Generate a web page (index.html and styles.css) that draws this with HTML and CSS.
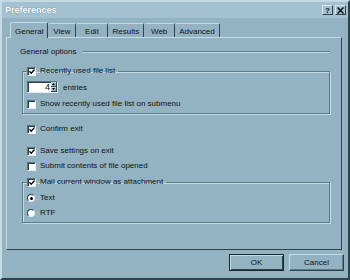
FILE: index.html
```html
<!DOCTYPE html>
<html lang="en">
<head>
    <meta charset="UTF-8">
    <title>Preferences</title>
    <link rel="stylesheet" href="styles.css">
</head>
<body>
    <div class="window">
        <div class="titlebar">
            <span class="title">Preferences</span>
            <div class="caption-btns">
                <span class="cbtn">?</span>
                <span class="cbtn">
                    <svg width="7" height="7" viewBox="0 0 7 7"><path d="M0.5 0.5 L6.5 6.5 M6.5 0.5 L0.5 6.5" stroke="#111" stroke-width="1.5"/></svg>
                </span>
            </div>
        </div>
        <div class="tabs">
            <div class="tab active">General</div>
            <div class="tab">View</div>
            <div class="tab">Edit</div>
            <div class="tab">Results</div>
            <div class="tab">Web</div>
            <div class="tab">Advanced</div>
        </div>
        <div class="panel">
            <div class="section-head"><span>General options</span><span class="rule"></span></div>

            <fieldset class="group">
                <legend>
                    <label class="check"><span class="box"><svg width="7" height="7" viewBox="0 0 7 7"><path d="M0.5 3.2 L2.6 5.4 L6.5 1.2" stroke="#000" stroke-width="1.6" fill="none"/></svg></span>Recently used file list</label>
                </legend>
                <div class="spin-row">
                    <div class="spin">
                        <span class="spin-val">4</span>
                        <span class="arrows">
                            <span class="arrow"><svg width="5" height="3" viewBox="0 0 5 3"><path d="M0 3 L2.5 0 L5 3Z" fill="#000"/></svg></span>
                            <span class="arrow"><svg width="5" height="3" viewBox="0 0 5 3"><path d="M0 0 L2.5 3 L5 0Z" fill="#000"/></svg></span>
                        </span>
                    </div>
                    <span>entries</span>
                </div>
                <label class="check show-row"><span class="box"></span>Show recently used file list on submenu</label>
            </fieldset>

            <label class="check row confirm"><span class="box"><svg width="7" height="7" viewBox="0 0 7 7"><path d="M0.5 3.2 L2.6 5.4 L6.5 1.2" stroke="#000" stroke-width="1.6" fill="none"/></svg></span>Confirm exit</label>
            <label class="check row save"><span class="box"><svg width="7" height="7" viewBox="0 0 7 7"><path d="M0.5 3.2 L2.6 5.4 L6.5 1.2" stroke="#000" stroke-width="1.6" fill="none"/></svg></span>Save settings on exit</label>
            <label class="check row submit"><span class="box"></span>Submit contents of file opened</label>

            <fieldset class="group mail">
                <legend>
                    <label class="check"><span class="box"><svg width="7" height="7" viewBox="0 0 7 7"><path d="M0.5 3.2 L2.6 5.4 L6.5 1.2" stroke="#000" stroke-width="1.6" fill="none"/></svg></span>Mail current window as attachment</label>
                </legend>
                <label class="check radio-row first"><span class="radio on"></span>Text</label>
                <label class="check radio-row"><span class="radio"></span>RTF</label>
            </fieldset>
        </div>
        <div class="footer">
            <button class="btn default">OK</button>
            <button class="btn">Cancel</button>
        </div>
    </div>
</body>
</html>
```

FILE: styles.css
```css
body {
    margin: 0;
    padding: 0;
    background-color: #93b3c3;
    font-family: "Liberation Sans", Arial, sans-serif;
    font-size: 8px;
    color: #111;
}
.window {
    width: 350px;
    height: 280px;
    box-sizing: border-box;
    background-color: #93b3c3;
    border: 2px solid;
    border-color: #c4dae5 #2e434c #2e434c #c4dae5;
    display: flex;
    flex-direction: column;
}
.titlebar {
    height: 16px;
    display: flex;
    align-items: center;
    justify-content: space-between;
    padding: 0 2px 0 3px;
    background-color: #a3c1d0;
}
.title {
    color: #fff;
    font-weight: bold;
    font-size: 9px;
    text-shadow: 0 0 1px #4c6a78;
}
.caption-btns {
    display: flex;
    gap: 2px;
}
.cbtn {
    width: 11px;
    height: 10px;
    box-sizing: border-box;
    display: flex;
    align-items: center;
    justify-content: center;
    font-weight: bold;
    font-size: 8px;
    background-color: #a3c1d0;
    border: 1px solid;
    border-color: #d8e8ef #2e434c #2e434c #d8e8ef;
}
.tabs {
    display: flex;
    align-items: flex-end;
    margin: 3px 0 0 8px;
    height: 16px;
}
.tab {
    min-width: 28px;
    height: 14px;
    box-sizing: border-box;
    padding: 1px 4px 0;
    display: flex;
    align-items: center;
    justify-content: center;
    border-top: 1px solid #c4dae5;
    border-left: 1px solid #c4dae5;
    border-right: 1px solid #2e434c;
    border-radius: 2px 2px 0 0;
}
.tab + .tab {
    border-left: none;
}
.tab.active {
    height: 16px;
    margin-bottom: -1px;
    background-color: #93b3c3;
    position: relative;
    z-index: 1;
}
.tab:nth-child(3) {
    min-width: 32px;
}
.tab:nth-child(5) {
    min-width: 31px;
}
.panel {
    height: 213px;
    box-sizing: border-box;
    margin: 0 6px 0 4px;
    padding: 9px 11px 0 13px;
    border: 1px solid;
    border-color: #c4dae5 #2e434c #2e434c #c4dae5;
    display: flex;
    flex-direction: column;
    align-items: flex-start;
}
.section-head {
    align-self: stretch;
    display: flex;
    align-items: center;
    height: 10px;
    line-height: 10px;
}
.section-head .rule {
    flex: 1;
    margin-left: 7px;
    height: 0;
    border-top: 1px solid #5d7b89;
    border-bottom: 1px solid #c4dae5;
}
.group {
    align-self: stretch;
    margin: 9px 0 0 2px;
    padding: 0 0 4px 4px;
    border: 1px solid #5d7b89;
    box-shadow: inset 1px 1px 0 #c4dae5, 1px 1px 0 #c4dae5;
    display: flex;
    flex-direction: column;
    align-items: flex-start;
}
.group legend {
    padding: 0 3px 0 0;
    margin-left: 0;
    color: #111;
}
.check {
    display: flex;
    align-items: center;
    height: 10px;
    line-height: 10px;
    white-space: nowrap;
    color: #111;
}
.box {
    width: 9px;
    height: 9px;
    box-sizing: border-box;
    margin-right: 4px;
    background-color: #fff;
    border: 1px solid;
    border-color: #55717e #e4eef2 #e4eef2 #55717e;
    box-shadow: inset 1px 1px 0 #2e434c;
    display: flex;
    align-items: center;
    justify-content: center;
}
.box svg {
    margin: 1px 0 0 1px;
}
.spin-row {
    display: flex;
    align-items: center;
    margin-top: 5px;
    height: 12px;
}
.spin {
    width: 31px;
    height: 12px;
    box-sizing: border-box;
    background-color: #fff;
    border: 1px solid;
    border-color: #55717e #e4eef2 #e4eef2 #55717e;
    box-shadow: inset 1px 1px 0 #2e434c;
    display: flex;
    align-items: stretch;
    margin-right: 5px;
}
.spin-val {
    flex: 1;
    text-align: right;
    line-height: 10px;
    font-size: 9px;
    padding-right: 1px;
}
.arrows {
    width: 6px;
    display: flex;
    flex-direction: column;
}
.arrow {
    flex: 1;
    background-color: #93b3c3;
    border: 1px solid;
    border-width: 0 1px 1px 0;
    border-color: #2e434c;
    box-shadow: inset 1px 1px 0 #c4dae5;
    display: flex;
    align-items: center;
    justify-content: center;
}
.arrow svg {
    width: 3px;
    height: 2px;
}
.show-row {
    margin-top: 6px;
}
.row {
    margin-left: 7px;
}
.confirm {
    margin-top: 10px;
}
.save {
    margin-top: 12px;
}
.submit {
    margin-top: 5px;
}
.group.mail {
    margin-top: 6px;
}
.radio-row {
    margin-top: 5px;
}
.radio-row.first {
    margin-top: 6px;
}
.radio {
    width: 8px;
    height: 8px;
    box-sizing: border-box;
    margin-right: 5px;
    border-radius: 50%;
    background-color: #fff;
    border: 1px solid;
    border-color: #2e434c #e4eef2 #e4eef2 #2e434c;
    display: flex;
    align-items: center;
    justify-content: center;
}
.radio.on::after {
    content: "";
    width: 3px;
    height: 3px;
    border-radius: 50%;
    background-color: #000;
}
.footer {
    display: flex;
    justify-content: flex-end;
    gap: 5px;
    padding: 4px 4px 0 0;
}
.btn {
    width: 55px;
    height: 17px;
    box-sizing: border-box;
    font-family: "Liberation Sans", Arial, sans-serif;
    font-size: 8px;
    color: #111;
    background-color: #93b3c3;
    border: 1px solid;
    border-color: #c4dae5 #2e434c #2e434c #c4dae5;
    box-shadow: inset -1px -1px 0 #5d7b89;
    padding: 0;
}
.btn.default {
    border: 1px solid #1b282e;
    box-shadow: inset 1px 1px 0 #c4dae5, inset -1px -1px 0 #2e434c;
}
```
